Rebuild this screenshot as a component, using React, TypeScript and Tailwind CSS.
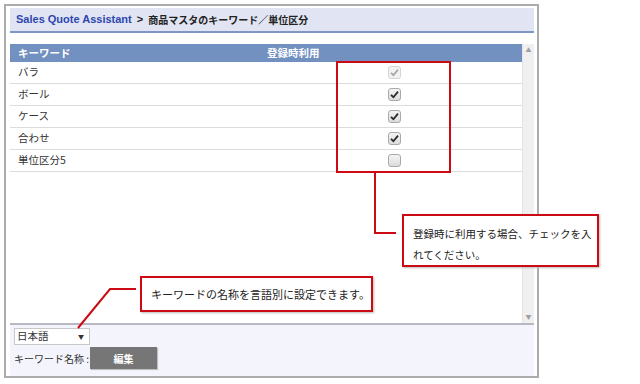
import React from 'react';

const rows = [
  { label: 'バラ', checked: true, disabled: true },
  { label: 'ボール', checked: true },
  { label: 'ケース', checked: true },
  { label: '合わせ', checked: true },
  { label: '単位区分5', checked: false },
];

function Box({ checked, disabled }: { checked: boolean; disabled?: boolean }) {
  return (
    <div
      className={
        'w-[13px] h-[13px] rounded-[3px] border flex items-center justify-center ' +
        (disabled ? 'border-[#d4d4d4] bg-[#f2f2f2]' : 'border-[#a9a9a9] bg-gradient-to-b from-[#f4f4f4] to-[#dcdcdc]')
      }
    >
      {checked && (
        <svg width="9" height="9" viewBox="0 0 9 9">
          <path
            d="M1 4.8 L3.4 7.2 L8 1.6"
            fill="none"
            stroke={disabled ? '#a8a8a8' : '#2a2a2a'}
            strokeWidth="1.8"
          />
        </svg>
      )}
    </div>
  );
}

export default function App() {
  const font = "font-['Noto_Sans_CJK_JP',sans-serif]";
  return (
    <div className={`relative w-[640px] h-[384px] bg-white overflow-hidden ${font}`}>
      <div className="absolute left-[4px] top-[4px] w-[535px] h-[374px] border-2 border-[#acacac] bg-white flex flex-col pl-[4px] pr-[3px] pt-[2px]">
        <div className="h-[25px] bg-[#e1e4f3] border-b-2 border-[#8296c6] flex items-center pl-[6px] text-[10px] font-bold text-[#222] leading-none">
          <span className="text-[#2c47ad] font-['Liberation_Sans',sans-serif] text-[11px]">Sales Quote Assistant</span>
          <span className="ml-[5px] text-[11px] font-['Liberation_Sans',sans-serif]">&gt;</span>
          <span className="ml-[5px]">商品マスタのキーワード／単位区分</span>
        </div>
        <div className="mt-[11px] h-[279px] flex">
          <div className="flex-1 flex flex-col">
            <div className="h-[18px] bg-[#7290c0] flex items-center text-white text-[10.5px] font-bold leading-none">
              <span className="pl-[8px] w-[257px]">キーワード</span>
              <span>登録時利用</span>
            </div>
            {rows.map((r) => (
              <div key={r.label} className="h-[22px] border-b border-[#dcdcdc] flex items-center text-[10.5px] text-[#333] leading-none">
                <span className="pl-[8px] w-[378px]">{r.label}</span>
                <Box checked={r.checked} disabled={r.disabled} />
              </div>
            ))}
          </div>
          <div className="w-[12px] bg-[#f0f0f0] border-l border-[#e4e4e4] flex flex-col justify-between items-center py-[3px]">
            <span className="text-[6px] text-[#a0a0a0] leading-none">▲</span>
            <span className="text-[6px] text-[#a0a0a0] leading-none">▼</span>
          </div>
        </div>
        <div className="flex-1 bg-[#f4f4fc] border-t-2 border-[#b8b8c4] pl-[4px] pt-[3px] text-[10.5px] text-[#333]">
          <div className="w-[76px] h-[17px] border border-[#c8c8c8] bg-white flex items-center justify-between px-[2px] leading-none">
            <span>日本語</span>
            <span className="text-[6px] mr-[3px]">▼</span>
          </div>
          <div className="flex items-center mt-[2px]">
            <span className="w-[76px] whitespace-nowrap text-[10px]">キーワード名称 :</span>
            <div className="w-[67px] h-[22px] bg-[#767676] shadow-[1px_1px_1px_#c0c0c0] flex items-center justify-center text-white text-[10px] font-bold">編集</div>
          </div>
        </div>
      </div>

      {/* annotations */}
      <div className="absolute left-[336px] top-[61px] w-[115px] h-[112px] border-2 border-[#cc0a14]" />
      <div className="absolute left-[374px] top-[172px] w-[2px] h-[62px] bg-[#cc0a14]" />
      <div className="absolute left-[374px] top-[232px] w-[22px] h-[2px] bg-[#cc0a14]" />
      <div className="absolute left-[402px] top-[214px] w-[197px] h-[53px] border-2 border-[#cc0a14] bg-white shadow-[1px_1px_2px_#bbb] pl-[9px] pt-[7px] text-[10.5px] leading-[21px] text-[#222]">
        登録時に利用する場合、チェックを入<br />れてください。
      </div>

      <svg className="absolute left-0 top-0" width="640" height="384">
        <path d="M78 328 L110 289 L136 289" fill="none" stroke="#cc0a14" strokeWidth="2" />
      </svg>
      <div className="absolute left-[140px] top-[276px] w-[233px] h-[36px] border-2 border-[#cc0a14] bg-white shadow-[1px_1px_2px_#bbb] flex items-center pl-[9px] text-[11px] text-[#222]">
        キーワードの名称を言語別に設定できます。
      </div>
    </div>
  );
}
